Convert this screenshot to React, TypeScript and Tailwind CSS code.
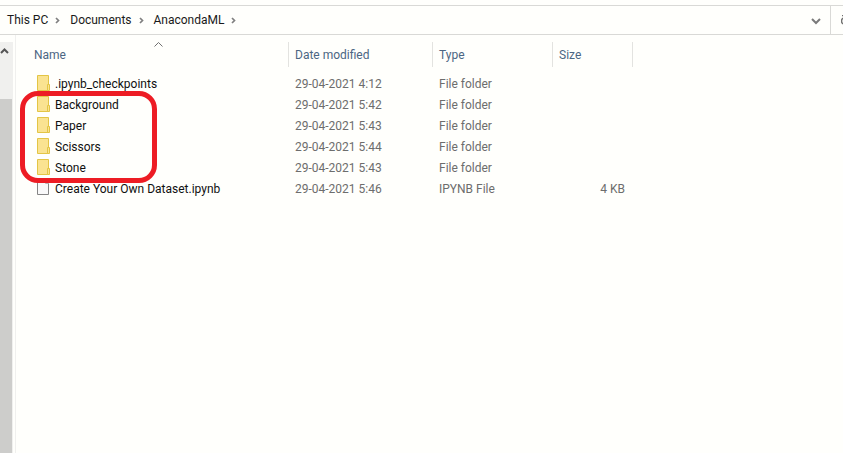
import React from "react";

type Entry = {
  name: string;
  modified: string;
  type: string;
  size?: string;
  folder: boolean;
};

const entries: Entry[] = [
  { name: ".ipynb_checkpoints", modified: "29-04-2021 4:12", type: "File folder", folder: true },
  { name: "Background", modified: "29-04-2021 5:42", type: "File folder", folder: true },
  { name: "Paper", modified: "29-04-2021 5:43", type: "File folder", folder: true },
  { name: "Scissors", modified: "29-04-2021 5:44", type: "File folder", folder: true },
  { name: "Stone", modified: "29-04-2021 5:43", type: "File folder", folder: true },
  { name: "Create Your Own Dataset.ipynb", modified: "29-04-2021 5:46", type: "IPYNB File", size: "4 KB", folder: false },
];

const path = ["This PC", "Documents", "AnacondaML"];

function FolderIcon() {
  return (
    <svg width="14" height="17" viewBox="0 0 14 17" aria-hidden="true" className="shrink-0">
      <path d="M.5 .5h11v15H.5z" fill="#fae391" stroke="#e3c545" />
      <path d="M10.500 15.500V9.500h2v6z" fill="#fae391" stroke="#e3c545" />
    </svg>
  );
}

function FileIcon() {
  return (
    <svg width="14" height="17" viewBox="0 0 14 17" aria-hidden="true" className="shrink-0">
      <path d="M.5 .5h8l3 3v11H.5z" fill="#f9f9f9" stroke="#858585" />
      <path d="M8.500 .5v3h3" fill="none" stroke="#b5b5b5" />
    </svg>
  );
}

function Crumb({ label }: { label: string }) {
  return (
    <li className="flex items-center">
      <button type="button" className="text-[#1a1a1a]">{label}</button>
      <svg width="22" height="8" viewBox="0 0 22 8" aria-hidden="true">
        <path d="M8 2l2.500 2.500L8 7" fill="none" stroke="#808080" strokeWidth="1.700" />
      </svg>
    </li>
  );
}

function AddressBar() {
  return (
    <div className="mt-[5px] flex h-[30px] border-y border-[#d9d9d6]">
      <nav aria-label="Address" className="flex flex-1 items-center pl-[7px]">
        <ol className="flex">
          {path.map((p) => (
            <Crumb key={p} label={p} />
          ))}
        </ol>
      </nav>
      <button type="button" aria-label="Previous locations" className="flex w-[28px] items-center pt-[2px] pl-[9px]">
        <svg width="10" height="7" viewBox="0 0 10 7" aria-hidden="true">
          <path d="M1 1l4 4 4-4" fill="none" stroke="#7a7a7a" strokeWidth="2" />
        </svg>
      </button>
      <button type="button" aria-label="Refresh" className="flex w-[13px] items-center justify-end border-l border-[#d9d9d6]">
        <svg width="2" height="10" viewBox="0 0 2 10" aria-hidden="true">
          <path d="M2 .5H1M2 3Q.5 4 .5 6T2 9" fill="none" stroke="#707070" strokeWidth="1.5" />
        </svg>
      </button>
    </div>
  );
}

function NavScrollbar() {
  return (
    <div className="mt-[7px] flex w-[13px] flex-col bg-[#f0f0ee]">
      <button type="button" aria-label="Scroll up" className="flex h-[57px] justify-center pt-[6px] pr-[4px]">
        <svg width="9" height="6" viewBox="0 0 9 6" aria-hidden="true">
          <path d="M1 5l3.500-3.500L8 5" fill="none" stroke="#555555" strokeWidth="2" />
        </svg>
      </button>
      <div className="w-[12px] flex-1 bg-[#cdcdcb]" />
    </div>
  );
}

function ColumnHead({ label, className, sorted }: { label: string; className: string; sorted?: boolean }) {
  return (
    <th
      scope="col"
      aria-sort={sorted ? "ascending" : undefined}
      className={"relative h-[25px] border-r border-[#e3e3e0] p-0 text-left font-normal " + className}
    >
      <button type="button" className="block w-full text-left text-[#4c6683]">{label}</button>
      {sorted && (
        <svg width="9" height="5" viewBox="0 0 9 5" aria-hidden="true" className="absolute top-0 left-1/2 ml-[2px]">
          <path d="M.5 4.500l4-4 4 4" fill="none" stroke="#707070" />
        </svg>
      )}
    </th>
  );
}

function FileList() {
  return (
    <main className="relative ml-[2px] flex-1 border-l border-[#f0f0ee] pt-[7px]">
      <table className="w-[617px] table-fixed border-separate border-spacing-0">
        <thead>
          <tr>
            <ColumnHead label="Name" className="w-[273px] pl-[18px]" sorted />
            <ColumnHead label="Date modified" className="w-[144px] pl-[6px]" />
            <ColumnHead label="Type" className="w-[120px] pl-[6px]" />
            <ColumnHead label="Size" className="w-[80px] pl-[6px]" />
          </tr>
        </thead>
        <tbody className="text-[#6d6d6d] before:block before:h-[6px]">
          {entries.map((e) => (
            <tr key={e.name} className="h-[21px]">
              <td className="p-0 pl-[21px] text-[#101010]">
                <span className="flex items-center gap-[4px]">
                  {e.folder ? <FolderIcon /> : <FileIcon />}
                  {e.name}
                </span>
              </td>
              <td className="p-0 pl-[6px]">{e.modified}</td>
              <td className="p-0 pl-[6px]">{e.type}</td>
              <td className="p-0 pr-[8px] text-right">{e.size}</td>
            </tr>
          ))}
        </tbody>
      </table>
      <div className="pointer-events-none absolute top-[56px] left-[4px] h-[92px] w-[137px] rounded-[18px] border-[5px] border-[#ed1c24]" />
    </main>
  );
}

export default function App() {
  return (
    <div className="flex min-h-screen flex-col bg-[#fffffc] font-[Roboto,'Open_Sans',sans-serif] text-[12px] leading-[16px] whitespace-nowrap">
      <AddressBar />
      <div className="flex flex-1">
        <NavScrollbar />
        <FileList />
      </div>
    </div>
  );
}
